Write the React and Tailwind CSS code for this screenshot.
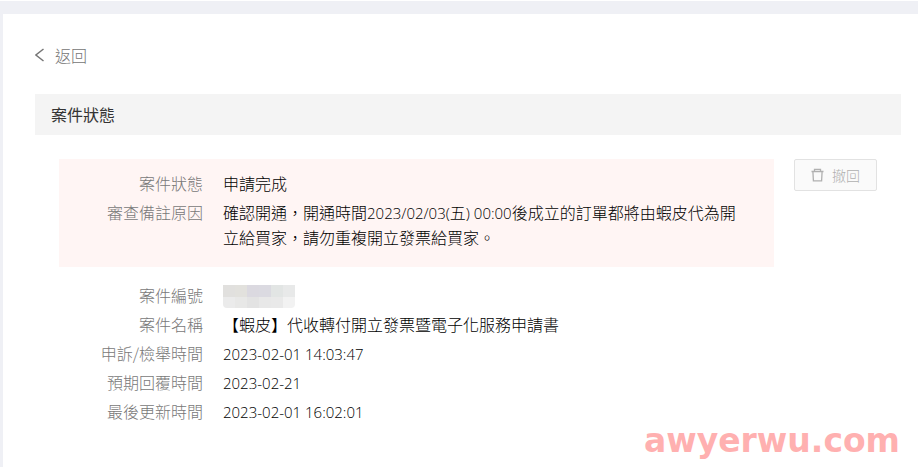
const reviewFields = [
  { label: '案件狀態', value: '申請完成' },
  {
    label: '審查備註原因',
    value: (
      <>
        確認開通，開通時間<Latin>2023/02/03(</Latin>五<Latin>) 00:00</Latin>
        後成立的訂單都將由蝦皮代為開立給買家，請勿重複開立發票給買家。
      </>
    ),
  },
];

const caseFields = [
  { label: '案件編號', value: <MaskedNumber /> },
  { label: '案件名稱', value: '【蝦皮】代收轉付開立發票暨電子化服務申請書' },
  { label: '申訴/檢舉時間', value: <Latin>2023-02-01 14:03:47</Latin> },
  { label: '預期回覆時間', value: <Latin>2023-02-21</Latin> },
  { label: '最後更新時間', value: <Latin>2023-02-01 16:02:01</Latin> },
];

function Latin({ children }) {
  return <span className="font-['Open_Sans'] text-[15px] leading-4 text-black">{children}</span>;
}

// Case number hidden behind a mosaic
function MaskedNumber() {
  return (
    <span className="mt-0.5 grid h-[23px] w-18 grid-cols-6 overflow-hidden rounded-b-sm">
      <span className="bg-[#e1e0de]" />
      <span className="bg-[#e2e1dd]" />
      <span className="bg-[#dbd9e0]" />
      <span className="bg-[#dbdae1]" />
      <span className="bg-[#e2e5e4]" />
      <span className="bg-[#e8e9e9]" />
      <span className="bg-[#ebebeb]" />
      <span className="bg-[#e8e8e7]" />
      <span className="bg-[#e3e3e3]" />
      <span className="bg-[#e8e8e8]" />
      <span className="bg-[#e9e9e9]" />
      <span className="bg-[#f2f2f2]" />
    </span>
  );
}

function FieldList({ fields }) {
  return (
    <dl className="space-y-1 leading-[25px]">
      {fields.map((field) => (
        <div key={field.label} className="flex gap-5">
          <dt className="w-36 shrink-0 text-right text-[#787878]">{field.label}</dt>
          <dd className="min-w-0 flex-1 text-black">{field.value}</dd>
        </div>
      ))}
    </dl>
  );
}

function BackIcon() {
  return (
    <svg className="h-4 w-2.5" viewBox="0 0 10 16" fill="none" stroke="currentColor" strokeWidth="1.5" aria-hidden="true">
      <path d="M8.5 2 .9 8l7.6 6" />
    </svg>
  );
}

function TrashIcon() {
  return (
    <svg className="size-3.5" viewBox="0 0 14 14" fill="none" stroke="currentColor" strokeWidth="1.3" aria-hidden="true">
      <path d="M.5 3.5h12M3.5 3.5V1.3h6v2.2M1.9 3.5l.5 9.3h8.2l.5-9.3" />
    </svg>
  );
}

export default function App() {
  return (
    <div className="relative flex min-h-screen flex-col bg-white pt-px pb-1 font-['Noto_Sans_CJK_TC',sans-serif] text-base font-light">
      <div className="flex flex-1 flex-col bg-[#eff0f5] pt-[13px] pl-[3px]">
        <main className="flex-1 bg-white pt-[29px] pr-[17px] pb-8 pl-8">
          <a href="#back" className="flex w-fit items-center gap-[10px] leading-6 text-[#757575]">
            <BackIcon />
            返回
          </a>

          <h1 className="mt-[27px] bg-[#f4f4f4] px-4 py-2 text-base leading-[25px] font-normal text-[#333]">案件狀態</h1>

          <div className="mt-6 flex items-start gap-5 px-6">
            <section className="min-w-0 flex-1">
              <div className="bg-[#fff5f4] pt-3 pr-6 pb-[17px]">
                <FieldList fields={reviewFields} />
              </div>
              <div className="pt-4 pr-6">
                <FieldList fields={caseFields} />
              </div>
            </section>
            <button
              type="button"
              disabled
              className="flex h-8 items-center gap-[7px] rounded-xs border border-[#e2e2e2] bg-[#fafafa] px-4 text-sm text-[#b0b0b0]"
            >
              <TrashIcon />
              撤回
            </button>
          </div>
        </main>
      </div>

      <p className="pointer-events-none absolute right-[18px] bottom-3 font-['DejaVu_Sans'] text-[33px] leading-9 font-bold text-[#ffb0b0]">
        awyerwu.com
      </p>
    </div>
  );
}
